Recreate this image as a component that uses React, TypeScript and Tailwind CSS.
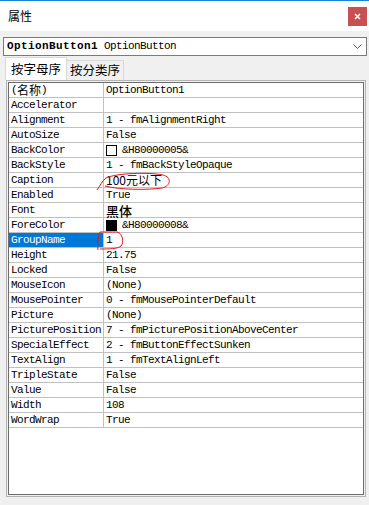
import React from 'react'

interface Prop {
  name: string
  value: React.ReactNode
  selected?: boolean
}

const MONO = "font-['Liberation_Mono','Noto_Sans_CJK_SC',monospace] text-[11px] tracking-[-0.6px]"
const CJK = "font-['Noto_Sans_CJK_SC','Noto_Sans',sans-serif]"

const Swatch = ({ color }: { color: string }) => (
  <span className={`inline-block w-[11px] h-[11px] border border-black ${color} mr-[5px]`} />
)

const PROPS: Prop[] = [
  { name: '(名称)', value: 'OptionButton1' },
  { name: 'Accelerator', value: '' },
  { name: 'Alignment', value: '1 - fmAlignmentRight' },
  { name: 'AutoSize', value: 'False' },
  { name: 'BackColor', value: <><Swatch color="bg-white" />&amp;H80000005&amp;</> },
  { name: 'BackStyle', value: '1 - fmBackStyleOpaque' },
  { name: 'Caption', value: <span className={`${CJK} text-[12px] leading-none tracking-normal`}>100元以下</span> },
  { name: 'Enabled', value: 'True' },
  { name: 'Font', value: <span className={`${CJK} text-[13px] leading-none tracking-normal font-medium`}>黑体</span> },
  { name: 'ForeColor', value: <><Swatch color="bg-black" />&amp;H80000008&amp;</> },
  { name: 'GroupName', value: '1', selected: true },
  { name: 'Height', value: '21.75' },
  { name: 'Locked', value: 'False' },
  { name: 'MouseIcon', value: '(None)' },
  { name: 'MousePointer', value: '0 - fmMousePointerDefault' },
  { name: 'Picture', value: '(None)' },
  { name: 'PicturePosition', value: '7 - fmPicturePositionAboveCenter' },
  { name: 'SpecialEffect', value: '2 - fmButtonEffectSunken' },
  { name: 'TextAlign', value: '1 - fmTextAlignLeft' },
  { name: 'TripleState', value: 'False' },
  { name: 'Value', value: 'False' },
  { name: 'Width', value: '108' },
  { name: 'WordWrap', value: 'True' },
]

export default function App() {
  return (
    <div className="relative w-[369px] h-[505px] bg-[#f0f0f0] overflow-hidden">
      <div className="h-px bg-[#1883d7]" />

      {/* title bar */}
      <div className="h-[30px] bg-white flex items-center justify-between pl-[8px] pr-[2px]">
        <span className={`${CJK} text-[12px] text-black`}>属性</span>
        <div className="w-[19px] h-[19px] bg-[#c75050] flex items-center justify-center">
          <svg width="7" height="7" viewBox="0 0 7 7" aria-hidden="true">
            <path d="M1 1L6 6M6 1L1 6" stroke="white" strokeWidth="1.6" />
          </svg>
        </div>
      </div>

      {/* object combo */}
      <div className="pt-[6px] pl-[3px]">
        <div className="w-[364px] h-[19px] bg-white border border-[#7a7a7a] flex items-center justify-between pl-[3px] pr-[4px]">
          <span className={`${MONO} text-black whitespace-pre`}>
            <b className="tracking-[0.4px]">OptionButton1</b> OptionButton
          </span>
          <svg width="9" height="5" viewBox="0 0 9 5" aria-hidden="true">
            <path d="M0.5 0.5L4.5 4.5L8.5 0.5" stroke="#555" fill="none" />
          </svg>
        </div>
      </div>

      {/* tabs */}
      <div className="flex items-end mt-[1px] pl-[5px] h-[23px]">
        <div className={`${CJK} w-[62px] h-[23px] bg-white border border-b-0 border-[#d9d9d9] text-[12.5px] text-black flex items-center justify-center`}>
          按字母序
        </div>
        <div className={`${CJK} w-[57px] h-[20px] bg-[#f0f0f0] border border-b-0 border-l-0 border-[#d9d9d9] text-[12.5px] text-black flex items-center justify-center`}>
          按分类序
        </div>
      </div>

      {/* property grid */}
      <div className="ml-[6px] w-[360px] h-[417px] border border-[#b4b4b4] p-px bg-[#f0f0f0]">
        <div className="h-full border border-[#6d6d6d] bg-white">
          {PROPS.map(p => (
            <div key={p.name} className={`flex h-[15px] border-b border-[#c0c0c0] ${MONO} leading-[14px] text-black`}>
              <div
                className={`w-[95px] shrink-0 border-r border-[#c0c0c0] pl-[2px] whitespace-pre flex items-center ${
                  p.selected ? 'bg-[#0078d7] text-white' : ''
                }`}
              >
                {p.name.startsWith('(') ? (
                  <>
                    <span>(</span>
                    <span className={`${CJK} text-[12px] leading-none tracking-normal`}>名称</span>
                    <span>)</span>
                  </>
                ) : (
                  p.name
                )}
              </div>
              <div className="pl-[2px] whitespace-pre flex items-center">{p.value}</div>
            </div>
          ))}
        </div>
      </div>

      {/* red hand-drawn annotations */}
      <svg className="absolute left-0 top-0 pointer-events-none" width="369" height="505" viewBox="0 0 369 505" aria-hidden="true">
        <path
          d="M97 190 C100 186 102 181 106 178 C116 173 150 172 163 175 C172 177 171 186 162 188 C148 190 120 190 105 186"
          stroke="#e8141b"
          strokeWidth="1"
          fill="none"
        />
        <path
          d="M100 232 C98 237 97 244 98 250 M100 232 L117 232 C123 233 124 243 121 246 C118 249 108 249 100 249"
          stroke="#e8141b"
          strokeWidth="1"
          fill="none"
        />
      </svg>
    </div>
  )
}
